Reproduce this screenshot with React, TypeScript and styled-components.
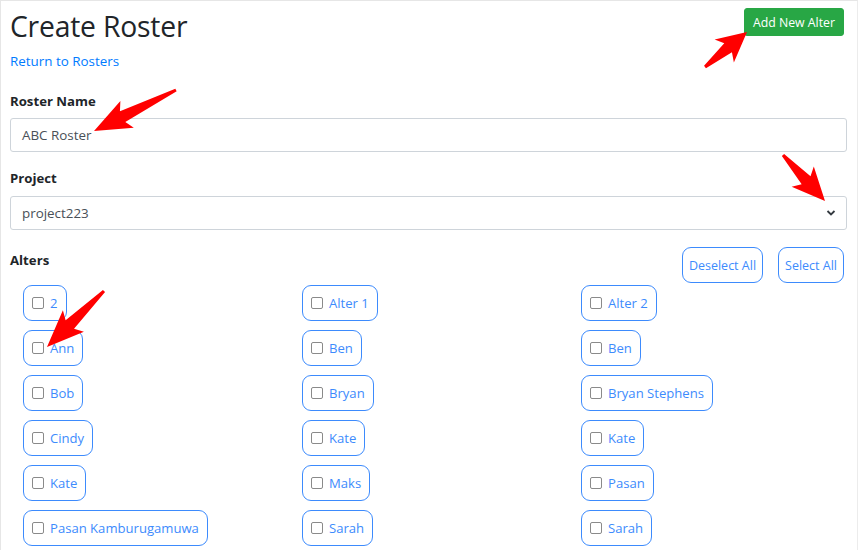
import React from "react";
import styled, { createGlobalStyle } from "styled-components";

const Global = createGlobalStyle`
  html, body { margin: 0; padding: 0; background: #fff; }
  body { font-family: "Open Sans", "Noto Sans", Arial, sans-serif; color: #212529; }
  * { box-sizing: border-box; }
`;

const Page = styled.div`
  position: relative;
  width: 858px;
  height: 550px;
  overflow: hidden;
  border-top: 1px solid #e6e6e6;
  border-left: 1px solid #e6e6e6;
  border-right: 1px solid #ececec;
  padding: 0 10px 0 9px;
`;

const Header = styled.div`
  display: flex;
  justify-content: space-between;
  align-items: flex-start;
  padding-top: 7px;
  padding-right: 3px;
`;

const Title = styled.h1`
  margin: 0;
  font-size: 28.3px;
  font-weight: 500;
  line-height: 36px;
  letter-spacing: -0.2px;
`;

const GreenButton = styled.button`
  background: #28a745;
  border: 1px solid #28a745;
  color: #fff;
  font-family: inherit;
  font-size: 12.3px;
  height: 28px;
  padding: 0 8px;
  border-radius: 3px;
`;

const Link = styled.a`
  display: block;
  color: #007bff;
  font-size: 13.4px;
  margin-top: 8px;
  line-height: 18px;
  text-decoration: none;
`;

const Label = styled.div`
  font-size: 13.2px;
  font-weight: 700;
  line-height: 18px;
  margin-top: ${(p: { $mt: number }) => p.$mt}px;
`;

const Field = styled.div`
  height: 34px;
  margin-top: ${(p: { $mt: number }) => p.$mt}px;
  border: 1px solid #ced4da;
  border-radius: 3px;
  display: flex;
  align-items: center;
  justify-content: space-between;
  padding: 0 10px 0 11px;
  font-size: 13.4px;
  color: #495057;
`;

const AltersHead = styled.div`
  display: flex;
  justify-content: space-between;
  align-items: flex-start;
  margin-top: 17px;
  padding-right: 3px;
`;

const ButtonRow = styled.div`
  display: flex;
  gap: 15px;
`;

const OutlineButton = styled.button`
  height: 36px;
  padding: 0 6px;
  border: 1.5px solid #3d8bfd;
  border-radius: 9px;
  background: #fff;
  color: #3d8bfd;
  font-family: inherit;
  font-size: 12.5px;
`;

const Grid = styled.div`
  display: grid;
  grid-template-columns: 279px 279px 279px;
  row-gap: 9px;
  padding-left: 13px;
  margin-top: 2px;
`;

const Pill = styled.label`
  justify-self: start;
  display: inline-flex;
  align-items: center;
  height: 36px;
  padding: 0 8px;
  border: 1.5px solid #3d8bfd;
  border-radius: 9px;
  color: #3d8bfd;
  font-size: 13.1px;
  gap: 6px;
`;

const Box = styled.span`
  width: 12px;
  height: 12px;
  border: 1px solid #8a8a8a;
  border-radius: 2px;
  background: #fff;
`;

const Overlay = styled.svg`
  position: absolute;
  left: 0;
  top: 0;
  pointer-events: none;
`;

function Arrow({ x1, y1, x2, y2 }: { x1: number; y1: number; x2: number; y2: number }) {
  const dx = x2 - x1;
  const dy = y2 - y1;
  const L = Math.hypot(dx, dy);
  const ang = (Math.atan2(dy, dx) * 180) / Math.PI;
  const hl = Math.min(32, L * 0.45);
  const pts = [
    [0, -1.5],
    [L - hl, -6],
    [L - hl - 5, -15],
    [L, 0],
    [L - hl - 5, 15],
    [L - hl, 6],
    [0, 1.5],
  ]
    .map((p) => p.join(","))
    .join(" ");
  return <polygon points={pts} fill="#ff0000" transform={`translate(${x1} ${y1}) rotate(${ang})`} />;
}

const col1 = ["2", "Ann", "Bob", "Cindy", "Kate", "Pasan Kamburugamuwa"];
const col2 = ["Alter 1", "Ben", "Bryan", "Kate", "Maks", "Sarah"];
const col3 = ["Alter 2", "Ben", "Bryan Stephens", "Kate", "Pasan", "Sarah"];

export default function App() {
  const items: string[] = [];
  for (let i = 0; i < 6; i++) items.push(col1[i], col2[i], col3[i]);
  return (
    <Page>
      <Global />
      <Header>
        <Title>Create Roster</Title>
        <GreenButton>Add New Alter</GreenButton>
      </Header>
      <Link href="#">Return to Rosters</Link>
      <Label $mt={22}>Roster Name</Label>
      <Field $mt={8}>ABC Roster</Field>
      <Label $mt={17}>Project</Label>
      <Field $mt={9}>
        <span>project223</span>
        <svg width="10" height="8" viewBox="0 0 10 8">
          <path d="M1.5 2 L5 5.5 L8.5 2" stroke="#343a40" strokeWidth="1.8" fill="none" />
        </svg>
      </Field>
      <AltersHead>
        <Label $mt={4}>Alters</Label>
        <ButtonRow>
          <OutlineButton>Deselect All</OutlineButton>
          <OutlineButton>Select All</OutlineButton>
        </ButtonRow>
      </AltersHead>
      <Grid>
        {items.map((n, i) => (
          <Pill key={i}>
            <Box />
            {n}
          </Pill>
        ))}
      </Grid>
      <Overlay width="858" height="550">
        <Arrow x1={175} y1={89} x2={93} y2={130} />
        <Arrow x1={704} y1={66} x2={746} y2={31} />
        <Arrow x1={782} y1={154} x2={824} y2={200} />
        <Arrow x1={103} y1={290} x2={46} y2={346} />
      </Overlay>
    </Page>
  );
}
